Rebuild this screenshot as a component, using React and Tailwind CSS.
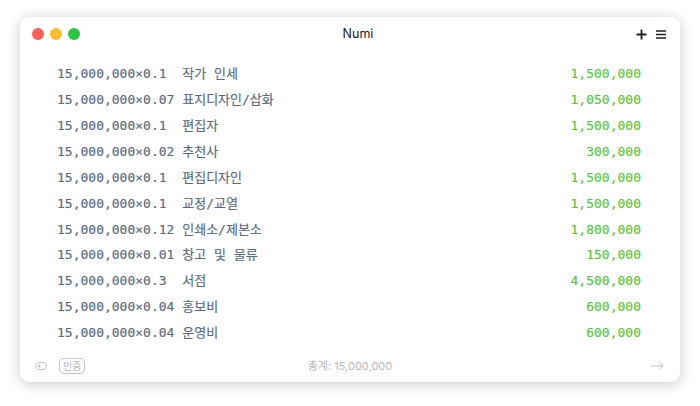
import React from "react";

const rows = [
  ["15,000,000×0.1  작가 인세", "1,500,000"],
  ["15,000,000×0.07 표지디자인/삽화", "1,050,000"],
  ["15,000,000×0.1  편집자", "1,500,000"],
  ["15,000,000×0.02 추천사", "300,000"],
  ["15,000,000×0.1  편집디자인", "1,500,000"],
  ["15,000,000×0.1  교정/교열", "1,500,000"],
  ["15,000,000×0.12 인쇄소/제본소", "1,800,000"],
  ["15,000,000×0.01 창고 및 물류", "150,000"],
  ["15,000,000×0.3  서점", "4,500,000"],
  ["15,000,000×0.04 홍보비", "600,000"],
  ["15,000,000×0.04 운영비", "600,000"],
];

const mono = { fontFamily: '"DejaVu Sans Mono", "Noto Sans CJK KR", monospace' };

const App = () => {
  return (
    <div className="w-[700px] h-[406px] bg-white pt-[17px] px-[20px]">
      <div className="h-[365px] rounded-[9px] bg-white shadow-[0_2px_14px_rgba(0,0,0,0.22)] flex flex-col">
        {/* title bar */}
        <div className="h-[34px] flex items-center px-[12px] relative">
          <div className="flex gap-[6px]">
            <span className="w-[12px] h-[12px] rounded-full bg-[#fe5f57]" />
            <span className="w-[12px] h-[12px] rounded-full bg-[#febc2e]" />
            <span className="w-[12px] h-[12px] rounded-full bg-[#28c840]" />
          </div>
          <div className="flex-1 text-center text-[12.5px] text-[#1a1a1a] font-['Inter',sans-serif]">
            Numi
          </div>
          <div className="flex items-center gap-[9px] pr-[2px]">
            <svg width="11" height="11" viewBox="0 0 11 11">
              <path d="M5.5 0.5v10M0.5 5.5h10" stroke="#222" strokeWidth="1.8" />
            </svg>
            <svg width="10" height="9" viewBox="0 0 10 9">
              <path d="M0 1h10M0 4.5h10M0 8h10" stroke="#222" strokeWidth="1.6" />
            </svg>
          </div>
        </div>

        {/* sheet */}
        <div className="pt-[10px] pl-[37px] pr-[39px] text-[13px] [-webkit-text-stroke:0.15px_currentColor]" style={mono}>
          {rows.map(([expr, result], i) => (
            <div key={i} className="h-[25.9px] flex items-center justify-between">
              <span className="whitespace-pre text-[#5a6a7e]">{expr}</span>
              <span className="text-[#58c736]">{result}</span>
            </div>
          ))}
        </div>

        {/* footer */}
        <div className="mt-auto h-[32px] flex items-center px-[15px] text-[#b9b9b9] font-['Inter','Noto_Sans_CJK_KR',sans-serif]">
          <div className="flex items-center gap-[12px] w-[120px]">
            <svg width="12" height="8" viewBox="0 0 12 8">
              <rect x="0.5" y="0.5" width="11" height="7" rx="3.5" fill="none" stroke="#c4c4c4" />
              <circle cx="4" cy="4" r="1.6" fill="#c4c4c4" />
            </svg>
            <span className="border border-[#c4c4c4] rounded-[4px] px-[3px] h-[16px] leading-[14px] text-[10px] text-[#b5b5b5]">
              인증
            </span>
          </div>
          <div className="flex-1 text-center text-[11px]">총계: 15,000,000</div>
          <div className="w-[120px] flex justify-end pr-[1px]">
            <svg width="13" height="8" viewBox="0 0 13 8">
              <path d="M0 4h12M8.5 0.5L12 4L8.5 7.5" fill="none" stroke="#c4c4c4" strokeWidth="1" />
            </svg>
          </div>
        </div>
      </div>
    </div>
  );
};

export default App;
